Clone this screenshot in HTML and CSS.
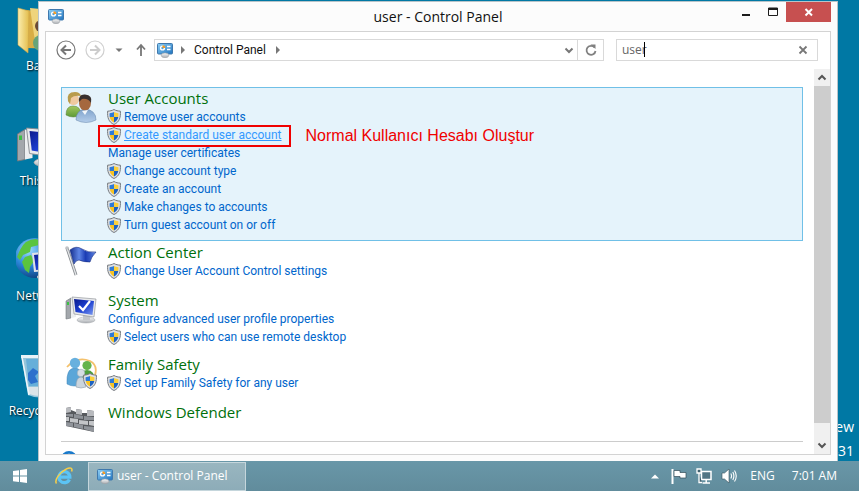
FILE: index.html
```html
<!DOCTYPE html>
<html lang="en">
<head>
<meta charset="utf-8">
<title>user - Control Panel</title>
<link rel="stylesheet" href="styles.css">
</head>
<body>
<svg class="defs" aria-hidden="true">
  <defs>
    <linearGradient id="blue" x1="0" y1="0" x2="1" y2="1"><stop offset="0" stop-color="#8fd0f5"/><stop offset="1" stop-color="#1f74c0"/></linearGradient>
    <linearGradient id="navy" x1="0" y1="0" x2="1" y2="1"><stop offset="0" stop-color="#0a1a8c"/><stop offset=".5" stop-color="#1c3fd0"/><stop offset="1" stop-color="#7f9cf0"/></linearGradient>
    <linearGradient id="flag" x1="0" y1="0" x2="1" y2="0"><stop offset="0" stop-color="#16308f"/><stop offset=".35" stop-color="#5f86e6"/><stop offset=".6" stop-color="#1b3cb4"/><stop offset="1" stop-color="#5b82e0"/></linearGradient>
    <linearGradient id="folder" x1="0" y1="0" x2="1" y2="0"><stop offset="0" stop-color="#fbeeb0"/><stop offset="1" stop-color="#e3bd4c"/></linearGradient>
    <linearGradient id="metal" x1="0" y1="0" x2="0" y2="1"><stop offset="0" stop-color="#fafafa"/><stop offset="1" stop-color="#a9adb2"/></linearGradient>
    <radialGradient id="globe" cx=".35" cy=".3" r=".8"><stop offset="0" stop-color="#9edcff"/><stop offset=".5" stop-color="#2a86d8"/><stop offset="1" stop-color="#08336f"/></radialGradient>
    <linearGradient id="green" x1="0" y1="0" x2="0" y2="1"><stop offset="0" stop-color="#a3c860"/><stop offset="1" stop-color="#5d9a36"/></linearGradient>
    <linearGradient id="shirt" x1="0" y1="0" x2="0" y2="1"><stop offset="0" stop-color="#7fa3cc"/><stop offset="1" stop-color="#b4cdea"/></linearGradient>
    <symbol id="shield" viewBox="0 0 14 16">
      <path d="M7 .5C9 1.700 11 2 13.400 2.200C13.700 8.500 12.500 13 7 15.500C1.500 13 .3 8.500 .6 2.200C3 2 5 1.700 7 .5Z" fill="#dfe1e4" stroke="#75797e" stroke-width="1"/>
      <path d="M7 3V8H2.700C2.500 6.500 2.500 5.500 2.600 4.200C4.300 4.100 5.500 3.800 7 3Z" fill="#2d7ad8"/>
      <path d="M7 3V8H11.300C11.500 6.500 11.500 5.500 11.400 4.200C9.700 4.100 8.500 3.800 7 3Z" fill="#fbd03a"/>
      <path d="M7 8V13.400C4.600 12.200 3.200 10.500 2.700 8Z" fill="#f8c322"/>
      <path d="M7 8V13.400C9.400 12.200 10.800 10.500 11.300 8Z" fill="#1c62c2"/>
    </symbol>
    <symbol id="panel" viewBox="0 0 16 16">
      <rect x=".5" y="1.500" width="15" height="10.500" rx="1" fill="url(#blue)" stroke="#3f78ad"/>
      <circle cx="5.500" cy="6" r="2.600" fill="#fff"/><circle cx="5.500" cy="6" r="1.200" fill="#4d9fdc"/><path d="M5.500 6V3.200A2.800 2.800 0 0 1 8.300 6Z" fill="#f59a23"/>
      <path d="M10 4.500H13.500M10 7.500H13.500" stroke="#fff" stroke-width="1.300"/>
      <ellipse cx="8" cy="13.300" rx="3.800" ry="2.400" fill="url(#metal)" stroke="#9ea3a8" stroke-width=".6"/>
    </symbol>
    <symbol id="computer" viewBox="0 0 32 32">
      <path d="M1 8L6 5V25L1 26Z" fill="#a3a7ac" stroke="#74787d" stroke-width=".6"/><path d="M6 5L11 6V24L6 25Z" fill="#eceef0"/>
      <rect x="2" y="9" width="2" height="3" fill="#3cbf45"/>
      <ellipse cx="21" cy="27" rx="9" ry="3" fill="url(#metal)" stroke="#a0a4a8" stroke-width=".5"/><path d="M18 22H25V27H18Z" fill="#c3c6ca"/>
      <path d="M7 4L31 6L29 24L9 21Z" fill="#e9eaec" stroke="#85898e" stroke-width=".6"/>
      <path d="M9 6L29 8L27.500 22L10.500 19Z" fill="url(#navy)"/>
    </symbol>
  </defs>
</svg>

<main class="desktop">
  <ul class="shortcuts">
    <li><svg viewBox="0 0 48 48"><path d="M10 3L46 6V42L10 41Z" fill="#d8ad45"/><path d="M14 1L46 4V43L20 41Z" fill="#efd47c"/><circle cx="25" cy="19" r="6" fill="#6a4a36"/><ellipse cx="25" cy="36" rx="8" ry="8" fill="#67a479"/><path d="M2 1L13 4L12 46L2 38Z" fill="url(#folder)" stroke="#cfa648" stroke-width=".6"/></svg><span>Baris</span></li>
    <li><svg viewBox="0 0 32 32"><use href="#computer"/></svg><span>This PC</span></li>
    <li><svg viewBox="0 0 48 48"><circle cx="19" cy="21" r="20" fill="url(#globe)"/><path d="M4 13Q9 2 20 2Q27 4 23 8L15 10L14 15L7 18L4 23L1 20ZM9 20L15 18L18 24L14 30L13 36L9 33L6 25Z" fill="#5bc43f"/><path d="M16 16L46 13V33L18 35Z" fill="#dfe1e6"/><path d="M18 18L44 15V31L20 33Z" fill="url(#navy)"/><ellipse cx="33" cy="40" rx="12" ry="4" fill="url(#metal)"/></svg><span>Network</span></li>
    <li><svg viewBox="0 0 48 48"><path d="M5 3H43L37 43Q24 48 12 43Z" fill="#b9d8e8" fill-opacity=".8"/><path d="M10 7H38L34 34H13Z" fill="#66afd9"/><path d="M5 3H43L42 6H5Z" fill="#e9f3f8"/><path d="M12 21L17 16L23 20L19 24L22 30L15 32L12 28Z" fill="#2d70cc"/><path d="M12 35L36 35L34 42Q24 46 13 42Z" fill="#dbe4e8"/><path d="M6 5L13 43" stroke="#eef6fa" stroke-width="1.500"/></svg><span>Recycle Bin</span></li>
  </ul>
  <p class="watermark">Windows 8.1 Pro Preview<br>Build 9431</p>

  <section class="window">
    <header class="titlebar">
      <svg class="title-icon" viewBox="0 0 16 16"><use href="#panel"/></svg>
      <h1>user - Control Panel</h1>
      <div class="caption-buttons">
        <button type="button" aria-label="Minimize"><svg viewBox="0 0 27 20"><path d="M10 13H18" stroke="#1c1c1c" stroke-width="2"/></svg></button>
        <button type="button" aria-label="Maximize"><svg viewBox="0 0 27 20"><path d="M9.500 6H18.500V13.500H9.500Z" fill="none" stroke="#1c1c1c"/><path d="M9 7H19" stroke="#1c1c1c" stroke-width="2"/></svg></button>
        <button type="button" class="close" aria-label="Close"><svg viewBox="0 0 45 20"><path d="M19.500 7L26 13.500M26 7L19.500 13.500" stroke="#fff" stroke-width="2"/></svg></button>
      </div>
    </header>

    <div class="frame">
      <nav class="toolbar">
        <button type="button" aria-label="Back"><svg viewBox="0 0 20 20"><circle cx="10" cy="10" r="9" fill="none" stroke="#777" stroke-width="1.200"/><path d="M15 10H6M10 5.500L5.500 10L10 14.500" fill="none" stroke="#777" stroke-width="2"/></svg></button>
        <button type="button" aria-label="Forward" disabled><svg viewBox="0 0 20 20"><circle cx="10" cy="10" r="9" fill="none" stroke="#d0d0d0" stroke-width="1.200"/><path d="M5 10H14M10 5.500L14.500 10L10 14.500" fill="none" stroke="#ccc" stroke-width="2"/></svg></button>
        <button type="button" class="recent" aria-label="Recent locations"><svg viewBox="0 0 10 20"><path d="M1.500 8.500H8.500L5 12Z" fill="#777"/></svg></button>
        <button type="button" class="up" aria-label="Up"><svg viewBox="0 0 12 20"><path d="M6 16V5.500M2 9.500L6 5L10 9.500" fill="none" stroke="#777" stroke-width="1.800"/></svg></button>
        <div class="address">
          <svg class="address-icon" viewBox="0 0 16 16"><use href="#panel"/></svg>
          <svg class="crumb" viewBox="0 0 6 8"><path d="M1 0L5 4L1 8Z" fill="#777"/></svg>
          <a href="#">Control Panel</a>
          <svg class="crumb" viewBox="0 0 6 8"><path d="M1 0L5 4L1 8Z" fill="#777"/></svg>
          <button type="button" class="history" aria-label="Previous locations"><svg viewBox="0 0 16 20"><path d="M4.500 8.500L8 12L11.500 8.500" fill="none" stroke="#777" stroke-width="2"/></svg></button>
          <button type="button" class="refresh" aria-label="Refresh"><svg viewBox="0 0 24 20"><path d="M15.600 7.500A4.500 4.500 0 1 0 16.500 11" fill="none" stroke="#808080" stroke-width="1.800"/><path d="M11.500 4.500H16.500V9Z" fill="#808080"/></svg></button>
        </div>
        <div class="search">
          <input type="text" value="user" aria-label="Search Control Panel">
          <span class="caret"></span>
          <button type="button" aria-label="Clear search"><svg viewBox="0 0 20 20"><path d="M6.500 6.500L13.500 13.500M13.500 6.500L6.500 13.500" stroke="#777" stroke-width="1.800"/></svg></button>
        </div>
      </nav>

      <div class="body">
        <div class="content">
          <div class="results">
            <article class="result selected">
              <svg class="result-icon" viewBox="0 0 32 32"><path d="M1 24Q1 15 8 15Q16 15 16 24Q8 28 1 24Z" fill="url(#green)" stroke="#547f37" stroke-width=".5"/><circle cx="8.500" cy="8.500" r="5.500" fill="#efc9a0"/><path d="M3 10Q1 1 10 1Q15 1 16 5Q9 4 6 7L5 13Z" fill="#b89b4c"/><path d="M11 29Q11 19 20 18Q31 19 31 29Q21 34 11 29Z" fill="url(#shirt)" stroke="#6485a9" stroke-width=".5"/><ellipse cx="20" cy="12" rx="6" ry="7.500" fill="#a5683e"/><path d="M14 11Q13 3 20 3.500Q28 4 26 12Q23 7 17 8Z" fill="#38302e"/><path d="M17 20L20 24L23 19" fill="#f2f6fa"/></svg>
              <div class="details">
                <h2><a href="#">User Accounts</a></h2>
                <ul>
                  <li><svg class="shield" viewBox="0 0 14 16"><use href="#shield"/></svg><a href="#">Remove user accounts</a></li>
                  <li class="marked"><svg class="shield" viewBox="0 0 14 16"><use href="#shield"/></svg><a href="#" class="hovered">Create standard user account</a><strong class="note" lang="tr">Normal Kullanıcı Hesabı Oluştur</strong></li>
                  <li><a href="#">Manage user certificates</a></li>
                  <li><svg class="shield" viewBox="0 0 14 16"><use href="#shield"/></svg><a href="#">Change account type</a></li>
                  <li><svg class="shield" viewBox="0 0 14 16"><use href="#shield"/></svg><a href="#">Create an account</a></li>
                  <li><svg class="shield" viewBox="0 0 14 16"><use href="#shield"/></svg><a href="#">Make changes to accounts</a></li>
                  <li><svg class="shield" viewBox="0 0 14 16"><use href="#shield"/></svg><a href="#">Turn guest account on or off</a></li>
                </ul>
              </div>
            </article>
            <article class="result">
              <svg class="result-icon" viewBox="0 0 32 32"><path d="M2 3L11 30" stroke="#868a8f" stroke-width="3"/><path d="M2 3L11 30" stroke="#e4e6e8" stroke-width="1.300"/><circle cx="2" cy="3" r="1.800" fill="#bfc2c5"/><path d="M5 5Q11 0 17 4Q23 8 31 7Q26 12 25 17Q18 17 14 15Q11 15 9 19Z" fill="url(#flag)" stroke="#132a80" stroke-width=".6"/></svg>
              <div class="details">
                <h2><a href="#">Action Center</a></h2>
                <ul>
                  <li><svg class="shield" viewBox="0 0 14 16"><use href="#shield"/></svg><a href="#">Change User Account Control settings</a></li>
                </ul>
              </div>
            </article>
            <article class="result">
              <svg class="result-icon" viewBox="0 0 32 32"><use href="#computer"/><path d="M14 13L18 17L25 8" fill="none" stroke="#fff" stroke-width="2.200"/></svg>
              <div class="details">
                <h2><a href="#">System</a></h2>
                <ul>
                  <li><a href="#">Configure advanced user profile properties</a></li>
                  <li><svg class="shield" viewBox="0 0 14 16"><use href="#shield"/></svg><a href="#">Select users who can use remote desktop</a></li>
                </ul>
              </div>
            </article>
            <article class="result">
              <svg class="result-icon" viewBox="0 0 32 32"><path d="M2 10Q12 -1 25 4Q33 8 30 18" fill="none" stroke="#f4c16c" stroke-width="1.800"/><path d="M15 24Q14 13 22 13Q30 13 29 24Z" fill="#4c9f3c"/><circle cx="22" cy="8.500" r="4.600" fill="#64b34c"/><path d="M2 27Q1 11 10 11Q18 11 17 27Q9 31 2 27Z" fill="#5ba6d8" stroke="#3f85b8" stroke-width=".5"/><circle cx="10" cy="6" r="5.200" fill="#68b0de"/><path d="M11 30Q11 20 16 20Q22 20 21 30Q16 32 11 30Z" fill="#cbd5dd" stroke="#91a0ad" stroke-width=".6"/><circle cx="16" cy="16" r="3.800" fill="#d4dde4" stroke="#91a0ad" stroke-width=".5"/><use href="#shield" x="18" y="16" width="14" height="16"/></svg>
              <div class="details">
                <h2><a href="#">Family Safety</a></h2>
                <ul>
                  <li><svg class="shield" viewBox="0 0 14 16"><use href="#shield"/></svg><a href="#">Set up Family Safety for any user</a></li>
                </ul>
              </div>
            </article>
            <article class="result">
              <svg class="result-icon" viewBox="0 0 32 32"><path d="M1 3L6 2V5L11 7V4L17 5V8L22 8V5L29 6V27L1 21Z" fill="#56595d"/><path d="M1 3L6 2V7L1 8ZM11 4L17 5V10L11 9ZM22 5L29 6V11L22 11Z" fill="#b8babe"/><path d="M1 9L8 9V12L1 11ZM9 9L18 11V14L9 13ZM19 11L29 12V15L19 15Z" fill="#8e9298"/><path d="M1 12L4 12V16L1 16ZM5 13L13 14V18L5 17ZM14 15L23 16V20L14 19ZM24 16L29 16V21L24 20Z" fill="#c3c5c8"/><path d="M1 17L8 18V22L1 21ZM9 18L18 20V24L9 22ZM19 21L29 22V27L19 24Z" fill="#90949a"/></svg>
              <div class="details">
                <h2><a href="#">Windows Defender</a></h2>
              </div>
            </article>
          </div>
          <a class="help" href="#" aria-label="Search Windows Help and Support"><svg viewBox="0 0 16 16"><circle cx="8" cy="8" r="8" fill="#1979ca"/><path d="M5.500 6A2.500 2.500 0 1 1 8 8.500V10M8 11.500V13" fill="none" stroke="#fff" stroke-width="1.500"/></svg></a>
        </div>
        <div class="scrollbar">
          <button type="button" aria-label="Scroll up"><svg viewBox="0 0 16 17"><path d="M4.500 10.500L8 7L11.500 10.500" fill="none" stroke="#555" stroke-width="2"/></svg></button>
          <span class="thumb"></span>
          <button type="button" aria-label="Scroll down"><svg viewBox="0 0 16 17"><path d="M4.500 6.500L8 10L11.500 6.500" fill="none" stroke="#555" stroke-width="2"/></svg></button>
        </div>
      </div>
    </div>
  </section>
</main>

<footer class="taskbar">
  <button type="button" class="start" aria-label="Start"><svg viewBox="0 0 14 14"><path d="M0 2L6 1.200V6.600H0ZM7 1L14 0V6.600H7ZM0 7.600H6V13L0 12.200ZM7 7.600H14V14L7 13.100Z" fill="#fff"/></svg></button>
  <button type="button" class="ie" aria-label="Internet Explorer"><svg viewBox="0 0 18 18"><path d="M14.400 12.500A5.500 5.500 0 1 1 14.900 10.200H5" fill="none" stroke="#5cc4f5" stroke-width="3.200"/><path d="M1.500 16.500C-1 13 5 5 11 2.200C15 .2 18 .6 16.600 4.500" fill="none" stroke="#f8cf48" stroke-width="1.500"/></svg></button>
  <button type="button" class="task"><svg viewBox="0 0 16 16"><use href="#panel"/></svg>user - Control Panel</button>
  <div class="tray">
    <button type="button" class="more" aria-label="Show hidden icons"><svg viewBox="0 0 8 16"><path d="M0 10.500L4 6.500L8 10.500Z" fill="#fff"/></svg></button>
    <button type="button" aria-label="Action Center"><svg viewBox="0 0 16 16"><path d="M1.500 1V16" stroke="#fff" stroke-width="2"/><path d="M3 2.500H9V4.500H15V10H9V8.500H3Z" fill="#fff" stroke="#304b57" stroke-width=".7"/></svg></button>
    <button type="button" aria-label="Network"><svg viewBox="0 0 16 16"><path d="M5.500 3.500H15V11.500H5.500Z" fill="#527584" stroke="#fff" stroke-width="1.500"/><path d="M10.200 12V14.500M6.500 15H14" stroke="#fff" stroke-width="1.500"/><path d="M1 1H5V5H1ZM3 5V14.500H6" fill="#41616f" stroke="#fff" stroke-width="1.300"/></svg></button>
    <button type="button" aria-label="Volume"><svg viewBox="0 0 16 16"><path d="M1 5H3.500L8 1V15L3.500 11H1Z" fill="#fff" stroke="#38515d" stroke-width=".6"/><path d="M9.800 5.500Q11.300 8 9.800 10.500M11.800 4Q14 8 11.800 12M13.500 2.500Q17 8 13.500 13.500" fill="none" stroke="#fff" stroke-width="1.100"/></svg></button>
    <button type="button" class="language">ENG</button>
    <time datetime="07:01">7:01 AM</time>
  </div>
</footer>
</body>
</html>
```

FILE: styles.css
```css
* {
  box-sizing: border-box;
}

body {
  margin: 0;
  height: 100vh;
  display: flex;
  flex-direction: column;
  overflow: hidden;
  font: 12px/18px "Open Sans", "Noto Sans", sans-serif;
  color: #111;
}

h1, h2, p, ul {
  margin: 0;
  padding: 0;
  font-weight: normal;
}

ul {
  list-style: none;
}

a {
  color: inherit;
  text-decoration: none;
}

button {
  display: flex;
  align-items: center;
  justify-content: center;
  flex: none;
  border: 0;
  padding: 0;
  background: none;
  font: inherit;
  color: inherit;
}

svg {
  display: block;
  flex: none;
}

.defs {
  position: absolute;
  width: 0;
  height: 0;
}

/* Desktop */

.desktop {
  position: relative;
  flex: 1;
  min-height: 0;
  overflow: hidden;
  background: #0078a4;
}

.shortcuts {
  width: 80px;
  padding-top: 7px;
  color: #fff;
  text-shadow: 1px 1px 2px #000;
}

.shortcuts li {
  display: flex;
  flex-direction: column;
  align-items: center;
  gap: 2px;
  height: 115px;
  white-space: nowrap;
}

.shortcuts svg {
  width: 48px;
  height: 48px;
}

.watermark {
  position: absolute;
  right: 5px;
  bottom: -2px;
  color: #fff;
  font-size: 14px;
  line-height: 24px;
  text-align: right;
}

/* Window */

.window {
  position: absolute;
  inset: 1px 21px 0 38px;
  display: flex;
  flex-direction: column;
  padding: 0 6px 6px;
  border: 1px solid #b8c4c9;
  border-bottom: 0;
  background: #fcfcfc;
}

.titlebar {
  display: grid;
  grid-template-columns: 1fr auto 1fr;
  height: 29px;
}

.title-icon {
  width: 16px;
  height: 16px;
  margin: 6px 3px;
}

.titlebar h1 {
  font-size: 14px;
  line-height: 29px;
}

.caption-buttons {
  display: flex;
  justify-content: flex-end;
  height: 20px;
}

.caption-buttons svg {
  width: 27px;
  height: 20px;
}

.caption-buttons .close {
  background: #c75050;
}

.caption-buttons .close svg {
  width: 45px;
}

.frame {
  flex: 1;
  min-height: 0;
  display: flex;
  flex-direction: column;
  border: 1px solid #d3d3d3;
  background: #fff;
}

.toolbar {
  display: flex;
  align-items: center;
  padding: 7px 12px 8px 10px;
}

.toolbar button svg {
  height: 20px;
}

.toolbar > button {
  width: 20px;
  margin-right: 9px;
}

.toolbar > .recent {
  width: 10px;
}

.toolbar > .up {
  width: 12px;
  margin: 0 7px 0 2px;
}

.address,
.search {
  display: flex;
  align-items: center;
  height: 22px;
  border: 1px solid #d9d9d9;
}

.address {
  flex: 1;
  margin-right: 12px;
}

.address-icon {
  width: 16px;
  height: 16px;
  margin: 0 7px 0 2px;
}

.crumb {
  width: 6px;
  height: 8px;
}

.address a {
  padding: 0 9px 0 8px;
}

.address a,
.result li a {
  font-family: Roboto, "Open Sans", sans-serif;
}

.history {
  width: 16px;
  margin-left: auto;
}

.refresh {
  width: 26px;
  height: 20px;
  border-left: 1px solid #d9d9d9;
}

.search {
  position: relative;
  width: 202px;
}

.search input {
  flex: 1;
  min-width: 0;
  border: 0;
  padding: 0 5px;
  outline: 0;
  background: none;
  font: inherit;
  color: #666;
}

.search button {
  width: 28px;
}

.caret {
  position: absolute;
  left: 27px;
  top: 2px;
  width: 1px;
  height: 15px;
  background: #000;
}

/* Results */

.body {
  flex: 1;
  min-height: 0;
  display: flex;
}

.content {
  flex: 1;
  min-width: 0;
  overflow: hidden;
  padding: 18px 11px 0 15px;
}

.results {
  border-bottom: 1px solid #ccc;
}

.result {
  display: flex;
  gap: 11px;
  min-height: 48px;
  padding: 1px 3px 6px;
  border: 1px solid transparent;
}

.result:last-child {
  min-height: 40px;
  padding-bottom: 0;
}

.result.selected {
  border-color: #70c0e7;
  background: #e5f3fb;
}

.result-icon {
  width: 32px;
  height: 32px;
  margin-top: 2px;
}

.result h2 {
  font-size: 15px;
  line-height: 19px;
  color: #00700b;
}

.result li {
  display: flex;
  align-items: center;
  width: max-content;
  height: 18px;
  color: #0066cc;
}

.shield {
  width: 14px;
  height: 16px;
  margin: 0 3px 0 -1px;
}

.result li .hovered {
  color: #3399ff;
  text-decoration: underline;
}

.marked {
  position: relative;
}

.marked::before {
  content: "";
  position: absolute;
  inset: -1px -9px -3px -10px;
  border: 2px solid #f00000;
}

.note {
  position: absolute;
  top: 0;
  left: 100%;
  margin-left: 24px;
  font: 16px/20px "Liberation Sans", Arial, sans-serif;
  color: #f00000;
  white-space: nowrap;
}

.help {
  display: block;
  width: 16px;
  margin-top: 9px;
}

.scrollbar {
  display: flex;
  flex-direction: column;
  width: 16px;
  background: #f0f0f0;
}

.scrollbar button {
  height: 17px;
}

.scrollbar svg {
  width: 16px;
  height: 17px;
}

.thumb {
  flex: 1;
  margin-bottom: 14px;
  background: #cdcdcd;
}

/* Taskbar */

.taskbar {
  display: flex;
  align-items: center;
  height: 30px;
  padding: 0 22px 0 13px;
  background: linear-gradient(#6997a8, #618c9c);
  color: #fff;
}

.start svg {
  width: 14px;
  height: 14px;
}

.ie {
  margin: 0 15px 0 28px;
}

.ie svg {
  width: 18px;
  height: 18px;
}

.taskbar .task {
  justify-content: flex-start;
  gap: 4px;
  width: 158px;
  height: 29px;
  padding: 0 8px;
  border: 1px solid #c5d6dc;
  background: linear-gradient(#99b6c0, #8dacb8);
}

.task svg,
.tray svg {
  width: 16px;
  height: 16px;
}

.tray {
  display: flex;
  align-items: center;
  gap: 9px;
  margin-left: auto;
}

.tray .more {
  margin-right: 3px;
}

.tray .more svg {
  width: 8px;
}

.tray .language {
  margin: 0 8px 0 4px;
}
```
